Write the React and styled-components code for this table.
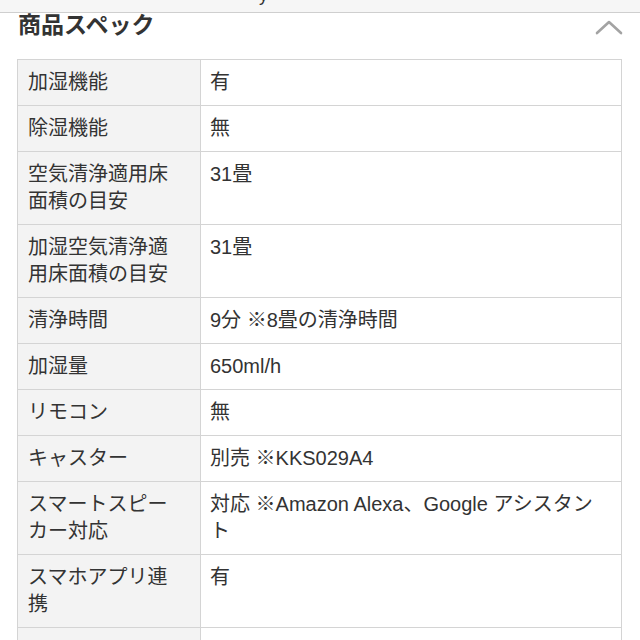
import React from "react";
import styled, { createGlobalStyle } from "styled-components";

const Global = createGlobalStyle`
  html, body { margin: 0; padding: 0; background: #fff; }
  body {
    font-family: "Liberation Sans", "Noto Sans CJK JP", sans-serif;
    color: #333;
    overflow: hidden;
  }
`;

const Page = styled.div`
  width: 640px;
  height: 640px;
  overflow: hidden;
`;

const TopBar = styled.div`
  height: 12px;
  background: #f6f6f6;
  border-bottom: 1px solid #cfcfcf;
  overflow: hidden;
  display: flex;
  align-items: flex-end;
  padding-left: 259px;
`;

const CutText = styled.span`
  font-size: 18px;
  line-height: 18px;
  margin-bottom: 8px;
  color: #333;
`;

const Header = styled.div`
  display: flex;
  align-items: center;
  justify-content: space-between;
  padding: 0 18px 0 18px;
  height: 24px;
`;

const Title = styled.h2`
  margin: 0;
  font-size: 23px;
  line-height: 24px;
  font-weight: bold;
  color: #333;
`;

const Chevron = styled.svg`
  width: 28px;
  height: 16px;
  margin-top: 4px;
  margin-right: -1px;
`;

const Table = styled.table`
  margin: 22px 18px 0 17px;
  width: 605px;
  border-collapse: collapse;
  table-layout: fixed;
  font-size: 20px;
  line-height: 27px;
`;

const Th = styled.th`
  width: 152px;
  background: #f3f3f3;
  border: 1px solid #d4d4d4;
  text-align: left;
  font-weight: normal;
  vertical-align: top;
  padding: 9px 20px 9px 10px;
  color: #333;
`;

const Td = styled.td`
  border: 1px solid #d4d4d4;
  vertical-align: top;
  padding: 9px 10px 9px 9px;
  color: #333;
`;

const rows = [
  ["加湿機能", "有"],
  ["除湿機能", "無"],
  ["空気清浄適用床面積の目安", "31畳"],
  ["加湿空気清浄適用床面積の目安", "31畳"],
  ["清浄時間", "9分 ※8畳の清浄時間"],
  ["加湿量", "650ml/h"],
  ["リモコン", "無"],
  ["キャスター", "別売 ※KKS029A4"],
  ["スマートスピーカー対応", "対応 ※Amazon Alexa、Google アシスタント"],
  ["スマホアプリ連携", "有"],
  ["\u00a0", "\u00a0"],
];

export default function App() {
  return (
    <Page>
      <Global />
      <TopBar>
        <CutText>y</CutText>
      </TopBar>
      <Header>
        <Title>商品スペック</Title>
        <Chevron viewBox="0 0 28 16">
          <polyline
            points="2,14 14,3 26,14"
            fill="none"
            stroke="#a3a3a3"
            strokeWidth="2.6"
            strokeLinecap="round"
            strokeLinejoin="round"
          />
        </Chevron>
      </Header>
      <Table>
        <tbody>
          {rows.map(([k, v], i) => (
            <tr key={i}>
              <Th>{k}</Th>
              <Td>{v}</Td>
            </tr>
          ))}
        </tbody>
      </Table>
    </Page>
  );
}
